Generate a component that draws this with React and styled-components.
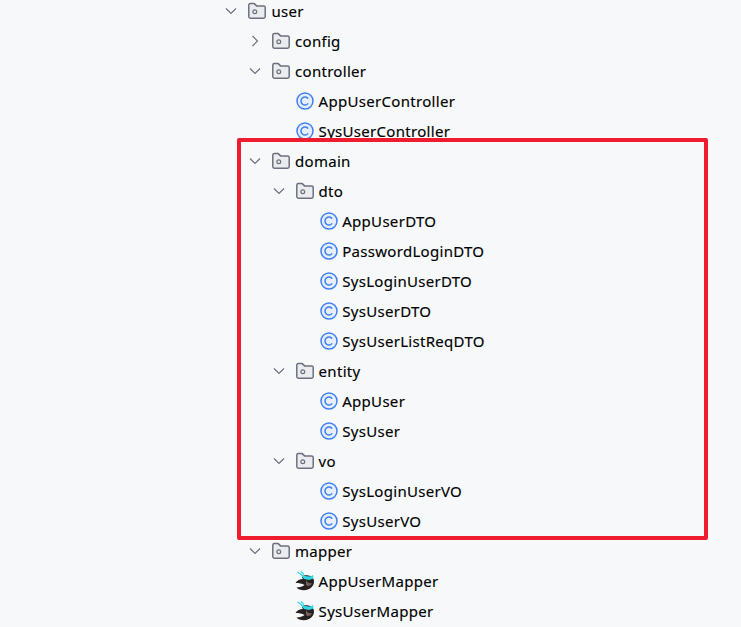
import styled, { createGlobalStyle } from 'styled-components';

const GlobalStyle = createGlobalStyle`
  html, body {
    margin: 0;
    padding: 0;
    background: #f7f8fa;
    overflow: hidden;
  }
`;

const Page = styled.div`
  position: relative;
  width: 741px;
  height: 627px;
  overflow: hidden;
  background: #f7f8fa;
`;

const Tree = styled.ul`
  list-style: none;
  margin: -4px 0 0;
  padding: 0;
  font-family: "Noto Sans", Inter, sans-serif;
  font-size: 15px;
  letter-spacing: 0.3px;
  color: #000;
  -webkit-text-stroke: 0.15px #000;
`;

const Row = styled.li`
  display: flex;
  align-items: center;
  height: 30px;
  padding-left: ${props => 224.4 + props.$depth * 23.6}px;
`;

const ChevronSlot = styled.span`
  display: flex;
  justify-content: center;
  width: 14px;
  margin-right: 10px;
`;

const IconSlot = styled.span`
  display: flex;
  flex: none;
  margin-right: ${props => props.$gap}px;
  margin-left: ${props => props.$shift}px;
`;

const Highlight = styled.div`
  position: absolute;
  left: 237px;
  top: 138px;
  width: 471px;
  height: 402px;
  box-sizing: border-box;
  border: 4px solid #ee1c2e;
  border-radius: 2px;
  pointer-events: none;
`;

const Chevron = ({ open }) => (
  <svg width="14" height="14" viewBox="0 0 14 14" fill="none" stroke="#6c707e" strokeWidth="1.2">
    {open ? <path d="M2 4.5 L7 9.5 L12 4.5" /> : <path d="M4.5 2 L9.5 7 L4.5 12" />}
  </svg>
);

const FolderIcon = () => (
  <svg width="18" height="18" viewBox="0 0 18 18" fill="#ebecf0" stroke="#6c707e" strokeWidth="1.5">
    <path d="M0.8 3.2 Q0.8 1.6 2.4 1.6 H6.2 L8.6 3.9 H15.6 Q17.2 3.9 17.2 5.5 V14.6 Q17.2 16.2 15.6 16.2 H2.4 Q0.8 16.2 0.8 14.6 Z" />
    <circle cx="6.8" cy="9.8" r="1.9" fill="none" strokeWidth="1.2" />
  </svg>
);

const ClassIcon = () => (
  <svg width="18" height="18" viewBox="0 0 18 18" fill="none">
    <circle cx="9" cy="9" r="8" fill="#e7effd" stroke="#3f80f5" strokeWidth="1.5" />
    <path d="M12.2 6.6 A4 4 0 1 0 12.2 11.4" stroke="#3f80f5" strokeWidth="1.5" />
  </svg>
);

const MapperIcon = () => (
  <svg width="21" height="20" viewBox="0 0 21 20" fill="none">
    <path d="M0.5 12 C2 9.5 5 8 8 8 C6.5 6.5 7 5 9 4.5 C13 3.5 17 5 18.5 8 C20 12 18 16 14 18 C10 20 4 19.5 1.5 16.5 C4.5 16.5 8 15.5 9.5 14 C7 12.5 4 12 0.5 12 Z" fill="#262020" />
    <path d="M11 9 C12 11 14 13 17 12 C16 15 13 16 11 14 Z" fill="#75605c" />
    <path d="M5 3 L10 5 L15 5.5 L18 4 L18.5 7.5 L14 9 L9 8 Z" fill="#2fd5e0" />
    <path d="M7 4 L2.5 1 M9 3.5 L6 0.5" stroke="#2fd5e0" strokeWidth="1.1" />
  </svg>
);

// kind: folder rows have a chevron, class and mapper rows leave that slot empty
const rows = [
  { name: 'user', depth: 0, kind: 'folder', open: true },
  { name: 'config', depth: 1, kind: 'folder' },
  { name: 'controller', depth: 1, kind: 'folder', open: true },
  { name: 'AppUserController', depth: 2, kind: 'class' },
  { name: 'SysUserController', depth: 2, kind: 'class' },
  { name: 'domain', depth: 1, kind: 'folder', open: true },
  { name: 'dto', depth: 2, kind: 'folder', open: true },
  { name: 'AppUserDTO', depth: 3, kind: 'class' },
  { name: 'PasswordLoginDTO', depth: 3, kind: 'class' },
  { name: 'SysLoginUserDTO', depth: 3, kind: 'class' },
  { name: 'SysUserDTO', depth: 3, kind: 'class' },
  { name: 'SysUserListReqDTO', depth: 3, kind: 'class' },
  { name: 'entity', depth: 2, kind: 'folder', open: true },
  { name: 'AppUser', depth: 3, kind: 'class' },
  { name: 'SysUser', depth: 3, kind: 'class' },
  { name: 'vo', depth: 2, kind: 'folder', open: true },
  { name: 'SysLoginUserVO', depth: 3, kind: 'class' },
  { name: 'SysUserVO', depth: 3, kind: 'class' },
  { name: 'mapper', depth: 1, kind: 'folder', open: true },
  { name: 'AppUserMapper', depth: 2, kind: 'mapper' },
  { name: 'SysUserMapper', depth: 2, kind: 'mapper' },
];

const TreeRow = ({ row }) => (
  <Row $depth={row.depth}>
    <ChevronSlot>{row.kind === 'folder' && <Chevron open={row.open} />}</ChevronSlot>
    {row.kind === 'folder' && <IconSlot $gap={5} $shift={0}><FolderIcon /></IconSlot>}
    {row.kind === 'class' && <IconSlot $gap={4.5} $shift={0.5}><ClassIcon /></IconSlot>}
    {row.kind === 'mapper' && <IconSlot $gap={3} $shift={-1}><MapperIcon /></IconSlot>}
    <span>{row.name}</span>
  </Row>
);

export default function App() {
  return (
    <Page>
      <GlobalStyle />
      <Tree>
        {rows.map(row => <TreeRow key={row.name} row={row} />)}
      </Tree>
      <Highlight />
    </Page>
  );
}
